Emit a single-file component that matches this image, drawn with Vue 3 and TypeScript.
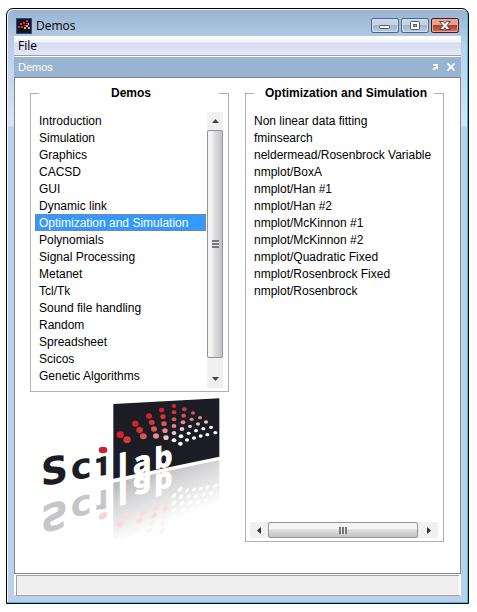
<script setup lang="ts">
import { ref } from 'vue'

interface Dot {
  x: number
  y: number
  r: number
  fill: string
}

const categories: string[] = [
  'Introduction',
  'Simulation',
  'Graphics',
  'CACSD',
  'GUI',
  'Dynamic link',
  'Optimization and Simulation',
  'Polynomials',
  'Signal Processing',
  'Metanet',
  'Tcl/Tk',
  'Sound file handling',
  'Random',
  'Spreadsheet',
  'Scicos',
  'Genetic Algorithms',
]

const demos: string[] = [
  'Non linear data fitting',
  'fminsearch',
  'neldermead/Rosenbrock Variable',
  'nmplot/BoxA',
  'nmplot/Han #1',
  'nmplot/Han #2',
  'nmplot/McKinnon #1',
  'nmplot/McKinnon #2',
  'nmplot/Quadratic Fixed',
  'nmplot/Rosenbrock Fixed',
  'nmplot/Rosenbrock',
]

const selected = ref('Optimization and Simulation')

const shades: string[] = ['#d6202e', '#d93338', '#e05552', '#ee8886', '#f6c0cc', '#ffffff']

// Each fan holds its dots from the outer arc inwards: [x, y, shade].
const fans: { r: number; dots: [number, number, number][] }[] = [
  { r: 11, dots: [[253, 116, 0], [273, 131, 1]] },
  { r: 10, dots: [[298, 83, 0], [311, 102, 1], [322, 121, 2]] },
  { r: 9, dots: [[339, 60, 0], [347, 79, 1], [354, 99, 2], [360, 120, 3]] },
  { r: 8, dots: [[377, 42, 0], [381, 62, 1], [384, 83, 2], [387, 104, 3], [390, 125, 4]] },
  { r: 7, dots: [[414, 30, 0], [414, 49, 1], [414, 70, 2], [414, 90, 3], [414, 111, 4], [414, 133, 5]] },
  { r: 7, dots: [[445, 40, 1], [443, 59, 2], [441, 79, 3], [438, 99, 4], [435, 121, 5], [433, 143, 5]] },
  { r: 6, dots: [[471, 51, 2], [467, 70, 3], [462, 91, 4], [458, 112, 5], [453, 132, 5]] },
  { r: 6, dots: [[492, 65, 3], [486, 84, 4], [480, 104, 5], [474, 126, 5]] },
  { r: 6, dots: [[510, 78, 4], [502, 98, 5], [494, 120, 5]] },
  { r: 6, dots: [[525, 94, 5], [514, 116, 5]] },
  { r: 6, dots: [[538, 110, 5]] },
]

const dots: Dot[] = fans.flatMap((fan) =>
  fan.dots.map(([x, y, shade]) => ({ x, y, r: fan.r, fill: shades[shade] })),
)

const mirrorFill = (dot: Dot): string => {
  if (dot.fill === '#ffffff' || dot.x > 400) return '#ffffff'
  return dot.y > 98 ? '#fbdcde' : '#fdf1f2'
}
</script>

<template>
  <main class="desktop">
    <section class="window" aria-label="Demos window">
      <header class="titlebar">
        <svg class="app-icon" viewBox="0 0 16 16" aria-hidden="true">
          <rect width="16" height="16" fill="#234f91" />
          <rect x="1" y="1" width="14" height="14" fill="#15161c" />
          <g fill="#e02c30">
            <rect x="2" y="8" width="2" height="2" />
            <rect x="4" y="5" width="2" height="2" />
            <rect x="5" y="8" width="2" height="2" />
            <rect x="7" y="4" width="2" height="2" />
            <rect x="8" y="7" width="2" height="1" />
            <rect x="10" y="2" width="2" height="2" />
            <rect x="10" y="5" width="2" height="1" />
          </g>
          <g fill="#e9a5a8">
            <rect x="8" y="9" width="2" height="2" />
            <rect x="10" y="7" width="2" height="2" />
            <rect x="12" y="5" width="1" height="2" />
            <rect x="12" y="9" width="2" height="2" />
          </g>
        </svg>
        <h1 class="title">Demos</h1>
        <div class="controls">
          <button class="control" type="button" aria-label="Minimize">
            <svg viewBox="0 0 26 13" aria-hidden="true">
              <rect x="7.5" y="6.500" width="10" height="3" rx="1" fill="#fff" stroke="#535a68" />
            </svg>
          </button>
          <button class="control" type="button" aria-label="Maximize">
            <svg viewBox="0 0 26 13" aria-hidden="true">
              <rect x="8.5" y="2.500" width="9" height="8" rx="1" fill="#fff" stroke="#535a68" />
              <rect x="11.5" y="5.500" width="3" height="2" fill="#a9bfd9" stroke="#535a68" />
            </svg>
          </button>
          <button class="control close" type="button" aria-label="Close">
            <svg viewBox="0 0 26 13" aria-hidden="true">
              <path
                d="M7.500 2.500h4l1.500 2 1.500-2h4l-3.500 4 3.500 4h-4l-1.500-2-1.500 2h-4l3.500-4z"
                fill="#fff"
                stroke="#5c4450"
                stroke-linejoin="round"
              />
            </svg>
          </button>
        </div>
      </header>

      <nav class="menubar">
        <button class="menu" type="button">File</button>
      </nav>

      <div class="dockbar">
        <h2 class="dock-title">Demos</h2>
        <button class="dock-button" type="button" aria-label="Undock">
          <svg viewBox="0 0 8 8" aria-hidden="true">
            <path d="M2 1h5v6L5.200 5.200 3 7.400 1.600 6 3.800 3.800 2 2z" fill="#fff" />
            <path d="M3 3.500h2" stroke="#99b4d1" />
          </svg>
        </button>
        <button class="dock-button" type="button" aria-label="Close tab">
          <svg viewBox="0 0 8 8" aria-hidden="true">
            <path d="M0.500 0.500l7 7M7.500 0.500l-7 7" stroke="#fff" stroke-width="1.700" />
          </svg>
        </button>
      </div>

      <div class="content">
        <div class="column">
          <fieldset class="group">
            <legend class="legend">Demos</legend>
            <div class="pane">
              <ul class="list">
                <li v-for="name in categories" :key="name">
                  <button
                    class="row"
                    :class="{ selected: name === selected }"
                    type="button"
                    :aria-pressed="name === selected"
                    @click="selected = name"
                  >
                    {{ name }}
                  </button>
                </li>
              </ul>
              <div class="scroll vertical">
                <button class="step" type="button" aria-label="Scroll up">
                  <svg viewBox="0 0 7 4" aria-hidden="true"><path d="M0 4L3.500 0 7 4z" fill="#444" /></svg>
                </button>
                <div class="track">
                  <div class="thumb"><span class="grip"></span></div>
                </div>
                <button class="step" type="button" aria-label="Scroll down">
                  <svg viewBox="0 0 7 4" aria-hidden="true"><path d="M0 0h7L3.500 4z" fill="#444" /></svg>
                </button>
              </div>
            </div>
          </fieldset>

          <svg class="logo" viewBox="0 0 570 438" role="img" aria-label="Scilab">
            <defs>
              <linearGradient id="fade" gradientUnits="userSpaceOnUse" x1="232" y1="250" x2="300" y2="420">
                <stop offset="0" stop-color="#b2b2b5" />
                <stop offset="0.400" stop-color="#d6d6d8" />
                <stop offset="1" stop-color="#ffffff" />
              </linearGradient>
            </defs>

            <polygon points="232,260 550,192 550,367 232,432" fill="url(#fade)" />
            <g transform="matrix(1 -0.421 0 -1 0 606)">
              <ellipse v-for="(dot, i) in dots" :key="i" :cx="dot.x" :cy="dot.y" :rx="dot.r" :ry="dot.r - 1" :fill="mirrorFill(dot)" />
              <ellipse cx="201" cy="162" rx="13" ry="10" fill="#f8d3d7" />
              <g class="word" fill="#c6c6c9" aria-hidden="true">
                <text class="wide" transform="translate(14 270) skewY(-9)" font-size="114">S</text>
                <text class="wide" transform="translate(104 253) skewY(-9)" font-size="106">c</text>
                <text transform="translate(186 241) skewY(-9)" font-size="104">ı</text>
                <polygon points="181,188 200,185 200,198 181,201" />
              </g>
              <g class="word light" aria-hidden="true">
                <text transform="translate(246 245) skewY(-12)" font-size="94">l</text>
                <text transform="translate(291 236) skewY(-12)" font-size="92">a</text>
                <text transform="translate(355 220) skewY(-12)" font-size="86">b</text>
              </g>
            </g>

            <polygon points="232,24 550,7 550,182 232,248" fill="#1c1d24" />
            <ellipse v-for="(dot, i) in dots" :key="i" :cx="dot.x" :cy="dot.y" :rx="dot.r" :ry="dot.r - 1" :fill="dot.fill" />
            <g class="word" fill="#1c1d24">
              <text class="wide" transform="translate(14 270) skewY(-9)" font-size="114">S</text>
              <text class="wide" transform="translate(104 253) skewY(-9)" font-size="106">c</text>
              <text transform="translate(186 241) skewY(-9)" font-size="104">ı</text>
              <polygon points="181,188 200,185 200,198 181,201" />
            </g>
            <ellipse cx="201" cy="162" rx="13" ry="10" fill="#d01f2e" />
            <g class="word light">
              <text transform="translate(246 245) skewY(-12)" font-size="94">l</text>
              <text transform="translate(291 236) skewY(-12)" font-size="92">a</text>
              <text transform="translate(355 220) skewY(-12)" font-size="86">b</text>
            </g>
          </svg>
        </div>

        <fieldset class="group">
          <legend class="legend">Optimization and Simulation</legend>
          <div class="pane stacked">
            <ul class="list">
              <li v-for="name in demos" :key="name">
                <button class="row" type="button">{{ name }}</button>
              </li>
            </ul>
            <div class="scroll horizontal">
              <button class="step" type="button" aria-label="Scroll left">
                <svg viewBox="0 0 4 7" aria-hidden="true"><path d="M4 0v7L0 3.500z" fill="#333" /></svg>
              </button>
              <div class="track">
                <div class="thumb"><span class="grip"></span></div>
              </div>
              <button class="step" type="button" aria-label="Scroll right">
                <svg viewBox="0 0 4 7" aria-hidden="true"><path d="M0 0v7l4-3.500z" fill="#333" /></svg>
              </button>
            </div>
          </div>
        </fieldset>
      </div>

      <footer class="status"></footer>
    </section>
  </main>
</template>

<style>
body {
  background: #fff;
}
</style>

<style scoped>
* {
  box-sizing: border-box;
}

.desktop {
  display: flex;
  min-height: 100vh;
  padding: 8px 8px 8px 6px;
  font-family: 'Liberation Sans', Arial, sans-serif;
  font-size: 12px;
  color: #000;
}

button {
  margin: 0;
  padding: 0;
  border: 0;
  background: none;
  font: inherit;
  color: inherit;
}

svg {
  display: block;
}

.window {
  flex: 1;
  min-width: 0;
  display: flex;
  flex-direction: column;
  padding: 0 7px 7px;
  border: 1px solid #000;
  border-radius: 7px 7px 0 0;
  background: linear-gradient(#98b3d1 0, #b9d0e9 36px, #d8e5f4 117px, #b9d1ea 118px);
  box-shadow: inset -1px -1px 0 #27c9e4, inset 1px 1px 0 #eef5fc;
}

.titlebar {
  display: flex;
  align-items: center;
  height: 27px;
  padding: 6px 2px 0;
}

.app-icon {
  width: 16px;
  height: 16px;
}

.title {
  flex: 1;
  margin: 0 0 0 4px;
  font-family: 'Open Sans', 'Noto Sans', sans-serif;
  font-size: 12px;
  font-weight: 400;
  line-height: 16px;
}

.controls {
  display: flex;
  gap: 2px;
  align-self: flex-start;
  padding-top: 3px;
}

.control {
  width: 28px;
  height: 15px;
  border: 1px solid #52647f;
  border-radius: 2px;
  background: linear-gradient(#c3d4e8 0 45%, #9db6d3 50%, #b7cce4);
  box-shadow: inset 0 0 0 1px #d2dfef;
}

.control.close {
  border-color: #4a1720;
  background: linear-gradient(#e3a396 0 45%, #b83b22 50%, #cf7258);
  box-shadow: inset 0 0 0 1px #e5a89d;
}

.menubar {
  display: flex;
  height: 20px;
  border-bottom: 1px solid #a0a0a0;
  background: linear-gradient(#fff 0, #f0f3fa 6px, #d6dbee 7px, #e3e8f7 19px);
}

.menu {
  padding: 0 4px;
  font-family: 'Open Sans', 'Noto Sans', sans-serif;
  line-height: 18px;
}

.dockbar {
  display: flex;
  align-items: center;
  gap: 8px;
  height: 22px;
  padding: 0 6px 0 4px;
  border-top: 1px solid #fff;
  border-bottom: 1px solid #828790;
  background: #99b4d1;
  color: #fff;
}

.dock-title {
  flex: 1;
  margin: 0;
  font-size: 11px;
  font-weight: 400;
  line-height: 16px;
}

.dock-button {
  width: 8px;
  height: 8px;
}

.content {
  flex: 1;
  display: grid;
  grid-template-columns: minmax(0, 1fr) minmax(0, 1fr);
  gap: 16px;
  padding: 7px 16px 31px 15px;
  border: 1px solid #828790;
  border-top: 0;
  background: #fff;
}

.column {
  display: flex;
  flex-direction: column;
}

.group {
  display: flex;
  flex-direction: column;
  min-width: 0;
  margin: 0;
  padding: 0 5px 3px 4px;
  border: 1px solid #b0b0b0;
}

.legend {
  width: calc(100% - 8px);
  margin: 0 auto;
  padding: 0 0 0 4px;
  font-weight: 700;
  line-height: 17px;
  text-align: center;
  white-space: nowrap;
}

.pane {
  flex: 1;
  display: flex;
  height: 100%;
  min-height: 286px;
  padding-top: 10px;
}

.stacked {
  flex-direction: column;
}

.list {
  flex: 1;
  min-width: 0;
  margin: 0;
  padding: 0;
  list-style: none;
  overflow: hidden;
}

.row {
  display: block;
  width: 100%;
  height: 17px;
  padding: 2px 4px 0;
  line-height: 15px;
  text-align: left;
  white-space: nowrap;
}

.stacked .row {
  padding-right: 0;
}

.row.selected {
  background: #3399ff;
  color: #fff;
  outline: 1px dotted #b07840;
  outline-offset: -1px;
}

.scroll {
  display: flex;
  background: #f0f0f0;
}

.vertical {
  flex-direction: column;
  width: 16px;
  margin-left: 1px;
}

.horizontal {
  height: 16px;
}

.step {
  display: grid;
  place-items: center;
  flex: none;
  width: 18px;
  height: 16px;
}

.vertical .step {
  width: 16px;
  height: 18px;
}

.step svg {
  width: 4px;
  height: 7px;
}

.vertical .step svg {
  width: 7px;
  height: 4px;
}

.track {
  flex: 1;
  min-height: 0;
}

.horizontal .track {
  padding-right: 2px;
}

.thumb {
  display: grid;
  place-items: center;
  height: 100%;
  border: 1px solid #949494;
  border-radius: 2px;
  background: linear-gradient(#f5f5f5 0 40%, #dcdcdf 50%, #c3c3c7);
}

.vertical .thumb {
  height: 95%;
  background: linear-gradient(to right, #f5f5f5 0 25%, #dcdcdf 50%, #c0c0c6);
}

.grip {
  width: 8px;
  height: 7px;
  background: repeating-linear-gradient(to right, #777 0 2px, #eee 2px 3px);
}

.vertical .grip {
  width: 7px;
  height: 8px;
  background: repeating-linear-gradient(#777 0 2px, #eee 2px 3px);
}

.logo {
  width: 190px;
  height: 146px;
  margin: 4px 0 0 6px;
  overflow: visible;
}

.word {
  font-family: 'Open Sans', 'Noto Sans', sans-serif;
  font-weight: 700;
}

.word .wide {
  font-family: 'DejaVu Sans', sans-serif;
}

.light {
  fill: #fff;
  stroke: #fff;
  stroke-width: 3;
}

.status {
  height: 22px;
  border: 2px solid #fff;
  border-top-width: 1px;
  border-bottom: 1px solid #a0a0a0;
  background: #efefef;
  box-shadow: inset 1px 1px 0 #a0a0a0, inset 0 -1px 0 #fff;
}
</style>
